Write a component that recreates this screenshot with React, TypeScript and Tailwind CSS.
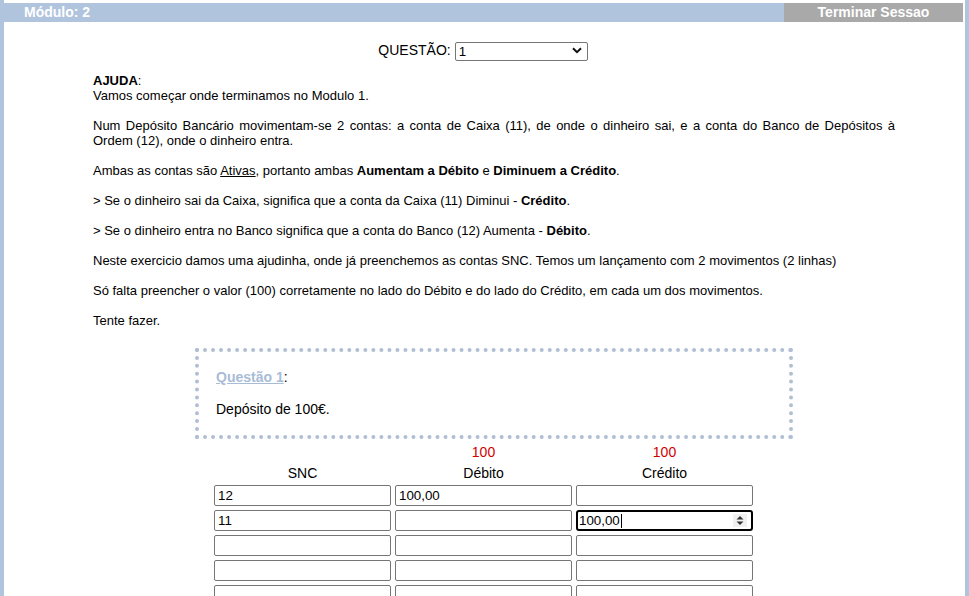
import React from "react";

const rows: [string, string, string][] = [
  ["12", "100,00", ""],
  ["11", "", "100,00"],
  ["", "", ""],
  ["", "", ""],
  ["", "", ""],
];

function Cell({ value, focused }: { value: string; focused?: boolean }) {
  if (focused) {
    return (
      <div className="relative flex h-[21px] w-[177px] items-center rounded-[3px] border-2 border-black bg-white pl-[1px] text-[13.33px] text-black">
        <span>{value}</span>
        <span className="ml-[1px] h-[14px] w-px bg-black" />
        {/* number spinner */}
        <span className="absolute right-[4px] top-[2px] flex h-[13px] w-[14px] items-center justify-center bg-[#f0f0f0]">
          <svg width="8" height="11" viewBox="0 0 8 11">
            <path d="M4 1 L7.5 4.5 L0.5 4.5 Z" fill="#333" />
            <path d="M4 10 L7.5 6.5 L0.5 6.5 Z" fill="#333" />
          </svg>
        </span>
      </div>
    );
  }
  return (
    <div className="flex h-[21px] w-[177px] items-center rounded-[2px] border border-[#767676] bg-white pl-[3px] text-[13.33px] text-black">
      {value}
    </div>
  );
}

export default function App() {
  return (
    <div
      className="min-h-[596px] border-l-4 border-r-4 border-[#b0c4de] bg-white pt-[3px] text-black"
      style={{ fontFamily: '"Liberation Sans", Arial, sans-serif' }}
    >
      {/* ── Top bar ── */}
      <div className="mr-[2px] flex h-[19px] items-center justify-between bg-[#b0c4de] text-[14px] font-bold leading-[19px] text-white">
        <span className="pl-[20px]">Módulo: 2</span>
        <span className="h-[19px] w-[179px] bg-[#a9a9a9] text-center">Terminar Sessao</span>
      </div>

      {/* ── Question picker ── */}
      <div className="mt-[18px] flex items-center justify-center gap-[4px] pr-[3px] text-[14px]">
        <span>QUESTÃO:</span>
        <div className="relative h-[19px] w-[133px]">
          <select className="h-[19px] w-full appearance-none rounded-[2px] border border-[#767676] bg-white pl-[3px] text-[13.33px] leading-[17px]">
            <option>1</option>
          </select>
          <svg
            className="pointer-events-none absolute right-[6px] top-[6px]"
            width="10"
            height="7"
            viewBox="0 0 10 7"
          >
            <path d="M1 1.2 L5 5.2 L9 1.2" fill="none" stroke="#111" strokeWidth="2" />
          </svg>
        </div>
      </div>

      {/* ── Help text ── */}
      <div className="ml-[89px] mt-[12px] w-[802px] text-justify text-[13px] leading-[15px]">
        <b>AJUDA</b>:
        <br />
        Vamos começar onde terminamos no Modulo 1.
        <br />
        <br />
        Num Depósito Bancário movimentam-se 2 contas: a conta de Caixa (11), de onde o dinheiro sai, e a conta do
        Banco de Depósitos à Ordem (12), onde o dinheiro entra.
        <br />
        <br />
        Ambas as contas são <u>Ativas</u>, portanto ambas <b>Aumentam a Débito</b> e <b>Diminuem a Crédito</b>.
        <br />
        <br />
        &gt; Se o dinheiro sai da Caixa, significa que a conta da Caixa (11) Diminui - <b>Crédito</b>.
        <br />
        <br />
        &gt; Se o dinheiro entra no Banco significa que a conta do Banco (12) Aumenta - <b>Débito</b>.
        <br />
        <br />
        Neste exercicio damos uma ajudinha, onde já preenchemos as contas SNC. Temos um lançamento com 2 movimentos
        (2 linhas)
        <br />
        <br />
        Só falta preencher o valor (100) corretamente no lado do Débito e do lado do Crédito, em cada um dos
        movimentos.
        <br />
        <br />
        Tente fazer.

        {/* ── Question box ── */}
        <div className="mx-auto mt-[20px] w-[598px] border-4 border-dotted border-[#b0bfd4] px-[17px] pb-[18px] pt-[17px] text-[14px] leading-[16px]">
          <div>
            <span className="font-bold text-[#a9bcd6] underline">Questão 1</span>:
          </div>
          <div className="mt-[16px]">Depósito de 100€.</div>
        </div>
      </div>

      {/* ── Entry table ── */}
      <div className="pr-[2px]">
        <div className="mx-auto mt-[5px] w-[539px] text-center text-[14px] leading-[16px]">
          <div className="grid grid-cols-3 gap-x-[4px]">
            <span />
            <span className="text-[#d40000]">100</span>
            <span className="text-[#d40000]">100</span>
            <span className="mt-[5px]">SNC</span>
            <span className="mt-[5px]">Débito</span>
            <span className="mt-[5px]">Crédito</span>
          </div>
          <div className="mt-[4px] grid grid-cols-3 gap-x-[4px] gap-y-[4px]">
            {rows.map((r, i) => (
              <React.Fragment key={i}>
                <Cell value={r[0]} />
                <Cell value={r[1]} />
                <Cell value={r[2]} focused={i === 1} />
              </React.Fragment>
            ))}
          </div>
        </div>
      </div>
    </div>
  );
}
